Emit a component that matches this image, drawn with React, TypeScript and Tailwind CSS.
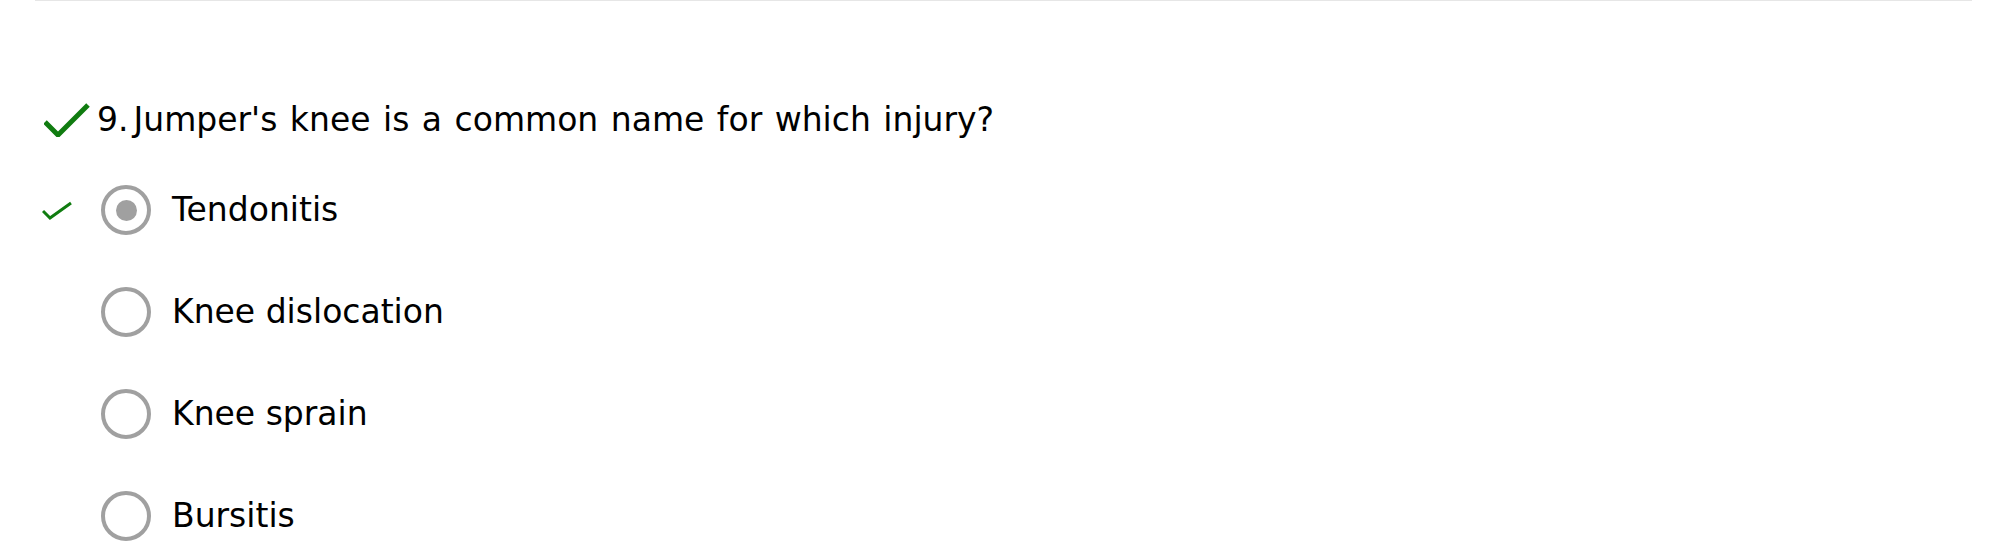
const options = [
  { id: 1, label: "Tendonitis", selected: true, correct: true },
  { id: 2, label: "Knee dislocation", selected: false, correct: false },
  { id: 3, label: "Knee sprain", selected: false, correct: false },
  { id: 4, label: "Bursitis", selected: false, correct: false },
];

const BigCheck = () => (
  <svg width="46" height="34" viewBox="0 0 46 34" className="shrink-0">
    <polyline
      points="1,19 14,32 44,2"
      fill="none"
      stroke="#107c10"
      strokeWidth="5"
    />
  </svg>
);

const SmallCheck = () => (
  <svg width="30" height="20" viewBox="0 0 30 20">
    <polyline
      points="1,11 8,18 29,3"
      fill="none"
      stroke="#107c10"
      strokeWidth="3"
    />
  </svg>
);

const Radio = ({ selected }: { selected: boolean }) => (
  <div className="flex h-[50px] w-[50px] shrink-0 items-center justify-center rounded-full border-4 border-[#a0a0a0]">
    {selected && <div className="h-[21px] w-[21px] rounded-full bg-[#a0a0a0]" />}
  </div>
);

export default function App() {
  return (
    <div className="min-h-screen bg-white font-['DejaVu_Sans',Verdana,sans-serif] text-black">
      <div className="mx-[35px] h-px bg-[#e6e6e6]" />

      <div className="mt-[100px] flex items-center pl-[44px]">
        <BigCheck />
        <h2 className="ml-[7px] flex text-[33px] leading-[38px]">
          <span>9.</span>
          <span className="ml-[5px] [word-spacing:2px]">
            Jumper's knee is a common name for which injury?
          </span>
        </h2>
      </div>

      <div className="mt-[20px]">
        {options.map((opt) => (
          <div key={opt.id} className="flex h-[102px] items-center pl-[42px]">
            <div className="flex w-[30px] shrink-0 items-center">
              {opt.correct && <SmallCheck />}
            </div>
            <div className="ml-[29px]">
              <Radio selected={opt.selected} />
            </div>
            <span className="ml-[21px] text-[33px] leading-[38px]">{opt.label}</span>
          </div>
        ))}
      </div>
    </div>
  );
}
